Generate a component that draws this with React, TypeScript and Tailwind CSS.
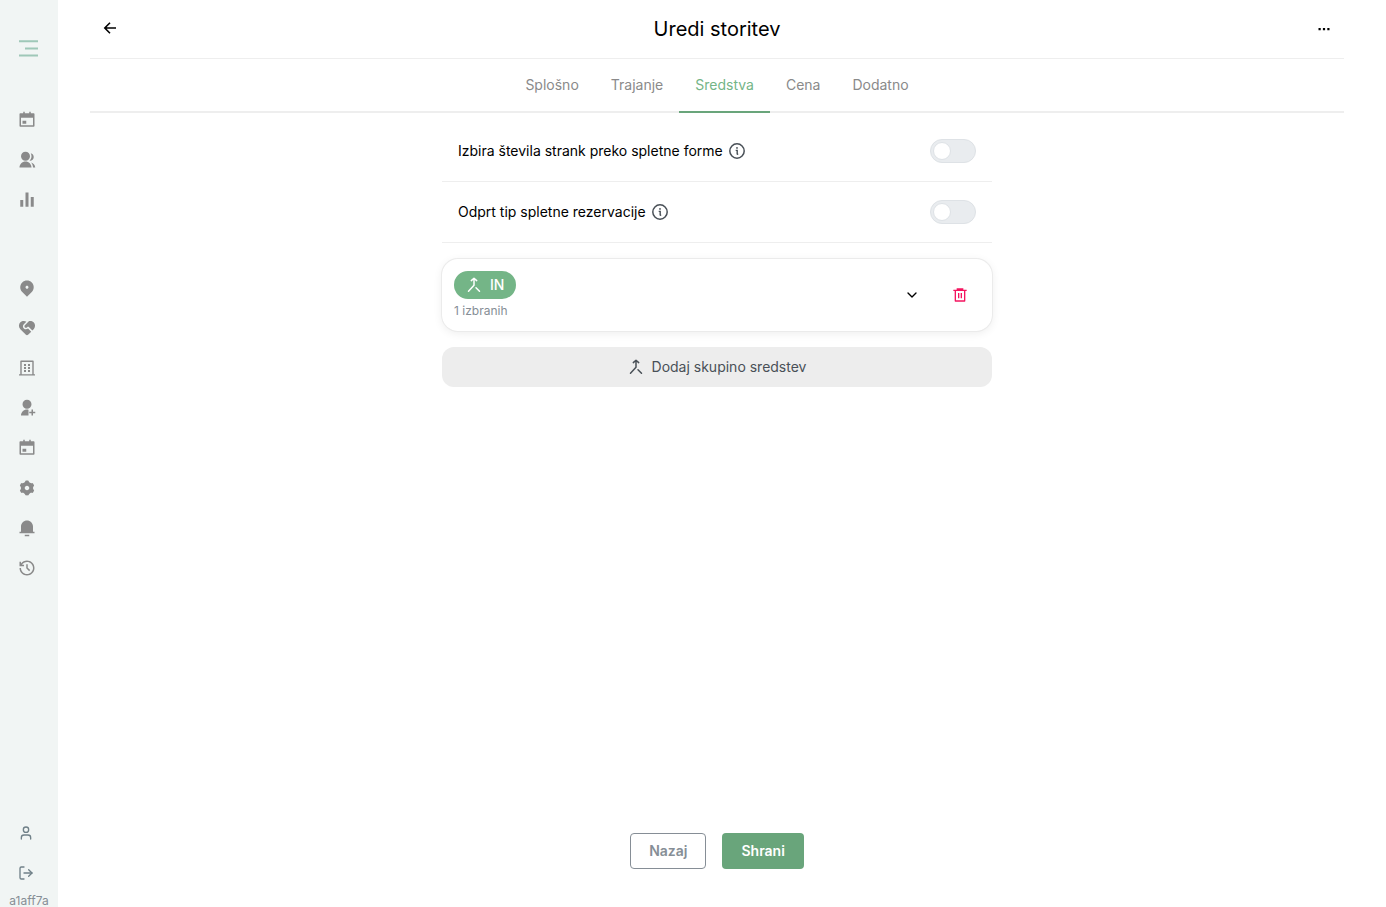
import type { ReactNode } from "react";
import { ChevronDown, LogOut, User } from "lucide-react";
import {
  RiBarChartFill,
  RiCalendarEventFill,
  RiDeleteBin6Line,
  RiGroupFill,
  RiHistoryLine,
  RiMapPin2Fill,
  RiNotification3Fill,
  RiServiceFill,
  RiSettings3Fill,
  RiUserAddFill,
} from "react-icons/ri";

interface NavItem {
  label: string;
  icon: ReactNode;
}

const mainNav: NavItem[] = [
  { label: "Koledar", icon: <RiCalendarEventFill className="size-[18px]" /> },
  { label: "Stranke", icon: <RiGroupFill className="size-[18px]" /> },
  { label: "Statistika", icon: <RiBarChartFill className="size-[18px]" /> },
];

const settingsNav: NavItem[] = [
  { label: "Lokacije", icon: <RiMapPin2Fill className="size-[18px]" /> },
  { label: "Storitve", icon: <RiServiceFill className="size-[18px]" /> },
  { label: "Sredstva", icon: <BuildingIcon /> },
  { label: "Zaposleni", icon: <RiUserAddFill className="size-[18px]" /> },
  { label: "Urnik", icon: <RiCalendarEventFill className="size-[18px]" /> },
  { label: "Nastavitve", icon: <RiSettings3Fill className="size-[18px]" /> },
  { label: "Obvestila", icon: <RiNotification3Fill className="size-[18px]" /> },
  { label: "Zgodovina", icon: <RiHistoryLine className="size-[18px]" /> },
];

const tabs = ["Splošno", "Trajanje", "Sredstva", "Cena", "Dodatno"];

function BuildingIcon() {
  return (
    <svg viewBox="0 0 18 18" className="size-[18px]" fill="currentColor" aria-hidden="true">
      <path d="M3 1.5h12a.7.7 0 0 1 .7.7V15.300H17v1.300H1v-1.300h1.300V2.200A.7.7 0 0 1 3 1.500ZM3.700 2.900v12.400h10.600V2.900Z" />
      <path d="M6 5h2v2H6zM10 5h2v2h-2zM6 8h2v2H6zM10 8h2v2h-2zM6 11h2v2H6zM10 11h2v2h-2z" />
    </svg>
  );
}

function MergeIcon() {
  return (
    <svg viewBox="0 0 16 16" className="size-4" fill="none" stroke="currentColor" strokeWidth="1.500" strokeLinecap="round" strokeLinejoin="round" aria-hidden="true">
      <path d="M5.300 3.600 8 1.200l2.700 2.400M8 1.500v6.800L2.500 14.300M10 10.800l3.500 3.500" />
    </svg>
  );
}

function InfoIcon() {
  return (
    <svg viewBox="0 0 16 16" className="size-4" fill="none" stroke="currentColor" strokeWidth="1.500" aria-hidden="true">
      <circle cx="8" cy="8" r="7.200" />
      <path d="M6.700 7.400h1.500v4M8.200 11.300h1" strokeWidth="1.400" />
      <circle cx="8" cy="4.900" r=".9" fill="currentColor" stroke="none" />
    </svg>
  );
}

function NavLink({ label, icon }: NavItem) {
  return (
    <a href="#" aria-label={label} className="flex h-10 items-center justify-center">
      {icon}
    </a>
  );
}

function Sidebar() {
  return (
    <aside className="flex w-[58px] shrink-0 flex-col bg-[#f1f5f4] text-[#8a8a8a]">
      <button type="button" aria-label="Meni" className="mt-7 flex h-10 items-center justify-center text-[#9fc8b8]">
        <svg viewBox="0 0 20 18" className="h-[18px] w-5" stroke="currentColor" strokeWidth="2" aria-hidden="true">
          <path d="M0 2.300h19M6 9.500h13M0 16.600h19" />
        </svg>
      </button>
      <nav className="mt-8 pr-1">
        {mainNav.map((item) => (
          <NavLink key={item.label} {...item} />
        ))}
      </nav>
      <nav className="mt-12 pr-1">
        {settingsNav.map((item) => (
          <NavLink key={item.label} {...item} />
        ))}
      </nav>
      <div className="mt-auto pr-1 text-[#708088]">
        <NavLink label="Profil" icon={<User className="mr-0.5 size-4" />} />
        <NavLink label="Odjava" icon={<LogOut className="mr-0.5 size-4" />} />
      </div>
      <p className="h-[14px] text-center text-xs leading-4 text-[#868e96]">a1aff7a</p>
    </aside>
  );
}

function SwitchRow({ id, label }: { id: string; label: string }) {
  return (
    <div className="flex h-[61px] items-center justify-between border-b border-[#eeeeee] px-4">
      <div className="flex items-center gap-1.5">
        <label htmlFor={id} className="text-sm text-black">
          {label}
        </label>
        <span className="text-[#495057]">
          <InfoIcon />
        </span>
      </div>
      <input
        id={id}
        type="checkbox"
        role="switch"
        className="h-6 w-[46px] cursor-pointer appearance-none rounded-full border border-[#dee2e6] bg-[#e9ecef] px-[2px] py-[2px] before:block before:size-[18px] before:rounded-full before:border before:border-[#dee2e6] before:bg-white checked:bg-[#69a57b] checked:before:ml-[22px]"
      />
    </div>
  );
}

export default function App() {
  return (
    <div className="flex min-h-screen bg-white font-['Inter',sans-serif]">
      <Sidebar />
      <main className="flex min-w-0 flex-1 flex-col pr-[42px] pl-8">
        <header className="flex h-[59px] items-center justify-between border-b border-[#eeeeee] px-3 text-black">
          <button type="button" aria-label="Nazaj">
            <svg viewBox="0 0 16 16" className="size-4" fill="none" stroke="currentColor" strokeWidth="1.600" aria-hidden="true">
              <path d="M14 7H3M8 1.800 2.800 7 8 12.200" />
            </svg>
          </button>
          <h1 className="text-xl">Uredi storitev</h1>
          <button type="button" aria-label="Več možnosti">
            <svg viewBox="0 0 16 16" className="size-4" fill="currentColor" aria-hidden="true">
              <path d="M2.500 7h2.200v2.200H2.500zM6.900 7h2.200v2.200H6.900zM11.300 7h2.200v2.200h-2.200z" />
            </svg>
          </button>
        </header>

        <div role="tablist" className="flex h-[54px] justify-center border-b-2 border-[#eeeeee]">
          {tabs.map((tab) => (
            <button
              key={tab}
              type="button"
              role="tab"
              aria-selected={tab === "Sredstva"}
              className="-mb-0.5 border-b-2 border-transparent px-4 text-sm text-[#8a8a8a] aria-selected:border-[#69a57b] aria-selected:text-[#74b587]"
            >
              {tab}
            </button>
          ))}
        </div>

        <section className="mx-auto w-full max-w-[550px] pt-2">
          <SwitchRow id="party-size" label="Izbira števila strank preko spletne forme" />
          <SwitchRow id="open-booking" label="Odprt tip spletne rezervacije" />

          <div className="mt-4 flex h-[72px] items-center rounded-2xl pr-4 pl-3 shadow-[0_0_0_1px_#ebebeb,0_2px_10px_rgba(0,0,0,0.08)]">
            <div className="flex-1">
              <div className="flex h-7 w-fit items-center gap-2 rounded-full bg-[#74b587] px-3 text-sm font-medium text-white">
                <MergeIcon />
                IN
              </div>
              <p className="mt-1 text-xs text-[#868e96]">1 izbranih</p>
            </div>
            <button type="button" aria-label="Razširi" className="flex size-8 items-center justify-center text-black">
              <ChevronDown className="size-4" />
            </button>
            <button type="button" aria-label="Izbriši" className="ml-4 flex size-8 items-center justify-center text-[#f4145f]">
              <RiDeleteBin6Line className="size-4" />
            </button>
          </div>

          <button type="button" className="mt-4 flex h-10 w-full items-center justify-center gap-2 rounded-xl bg-[#ededed] text-sm text-[#495057]">
            <MergeIcon />
            Dodaj skupino sredstev
          </button>
        </section>

        <footer className="mt-auto flex justify-center gap-4 pb-[38px] text-sm font-semibold">
          <button type="button" className="h-9 rounded border border-[#868e96] px-[18px] text-[#868e96]">
            Nazaj
          </button>
          <button type="button" className="h-9 rounded bg-[#69a57b] px-[19px] text-white">
            Shrani
          </button>
        </footer>
      </main>
    </div>
  );
}
